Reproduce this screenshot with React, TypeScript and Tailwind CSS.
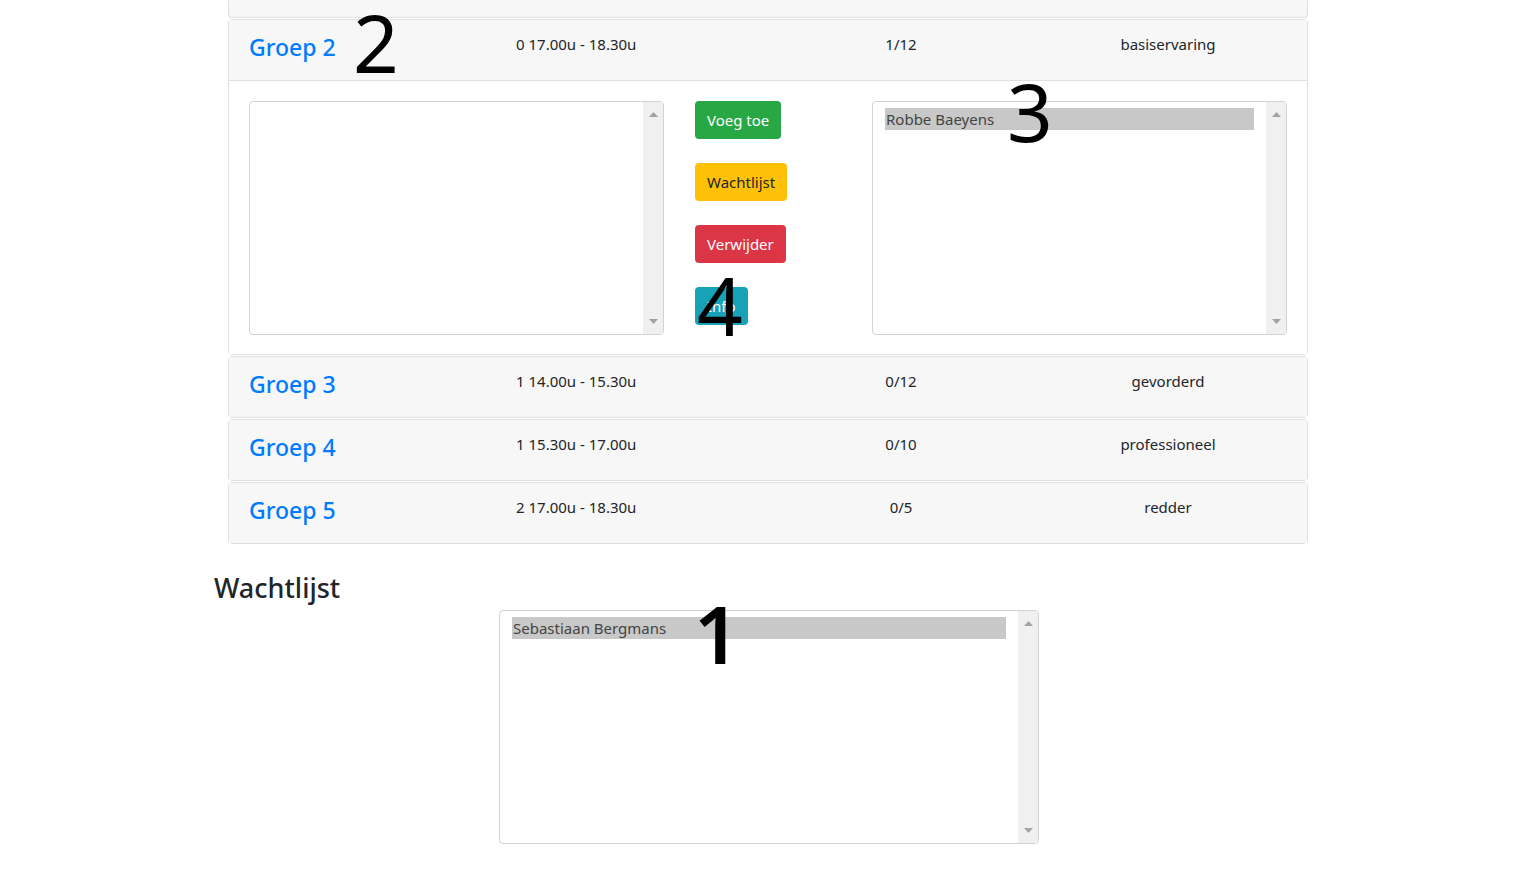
import React from 'react';

interface Groep {
  naam: string;
  tijd: string;
  bezetting: string;
  niveau: string;
}

const groepen: Groep[] = [
  { naam: 'Groep 3', tijd: '1 14.00u - 15.30u', bezetting: '0/12', niveau: 'gevorderd' },
  { naam: 'Groep 4', tijd: '1 15.30u - 17.00u', bezetting: '0/10', niveau: 'professioneel' },
  { naam: 'Groep 5', tijd: '2 17.00u - 18.30u', bezetting: '0/5', niveau: 'redder' },
];

const Scrollbar: React.FC = () => (
  <div className="w-[20px] h-full bg-[#f0f0f0] flex flex-col items-center justify-between py-[10px] flex-shrink-0">
    <svg width="9" height="5" viewBox="0 0 9 5">
      <path d="M0 5 L4.5 0 L9 5 Z" fill="#a3a3a3" />
    </svg>
    <svg width="9" height="5" viewBox="0 0 9 5">
      <path d="M0 0 L4.5 5 L9 0 Z" fill="#a3a3a3" />
    </svg>
  </div>
);

const ListBox: React.FC<{ items: string[]; className?: string }> = ({ items, className = '' }) => (
  <div className={`h-[234px] border border-[#ced4da] rounded-[4px] bg-white flex overflow-hidden ${className}`}>
    <div className="flex-1 pt-[6px] px-[12px]">
      {items.map((item) => (
        <div key={item} className="bg-[#c8c8c8] h-[22px] leading-[22px] text-[15px] text-[#444] pl-[1px]">
          {item}
        </div>
      ))}
    </div>
    <Scrollbar />
  </div>
);

const Marker: React.FC<{ n: string; className: string }> = ({ n, className }) => (
  <span className={`absolute text-black text-[80px] leading-none pointer-events-none ${className}`}>{n}</span>
);

const HeaderRow: React.FC<Groep & { open?: boolean }> = ({ naam, tijd, bezetting, niveau, open }) => (
  <div
    className={`bg-[#f7f7f7] px-[20px] pt-[12px] flex items-start text-[#212529] ${
      open ? 'h-[61px] border-b border-[#dfdfdf]' : 'h-[60px]'
    }`}
  >
    <div className="w-[267px] text-[#007bff] text-[23px] leading-[30px] font-medium">{naam}</div>
    <div className="w-[270px] text-[15px] leading-[24px]">{tijd}</div>
    <div className="w-[230px] text-center text-[15px] leading-[24px]">{bezetting}</div>
    <div className="ml-auto w-[238px] text-center text-[15px] leading-[24px]">{niveau}</div>
  </div>
);

const Btn: React.FC<{ label: string; className: string }> = ({ label, className }) => (
  <button className={`h-[38px] px-[12px] rounded-[4px] text-[15px] leading-[24px] ${className}`}>{label}</button>
);

export default function App() {
  return (
    <div className="min-h-screen bg-white" style={{ fontFamily: '"Noto Sans", "Open Sans", sans-serif' }}>
      <div className="w-[1110px] mx-auto">
        <div className="w-[1080px] ml-[14px]">
          {/* vorige groep, grotendeels uit beeld */}
          <div className="h-[18px] bg-[#f7f7f7] border-x border-b border-[#dfdfdf] rounded-b-[4px] mb-[1px]" />

          {/* Groep 2, opengeklapt */}
          <div className="relative border border-[#dfdfdf] rounded-[4px] mb-[1px]">
            <HeaderRow naam="Groep 2" tijd="0 17.00u - 18.30u" bezetting="1/12" niveau="basiservaring" open />
            <Marker n="2" className="left-[124px] top-[-18px]" />
            <div className="pt-[20px] pb-[19px] px-[20px] flex bg-white">
              <ListBox items={[]} className="w-[415px]" />
              <div className="w-[208px] pl-[31px] flex flex-col items-start gap-[24px]">
                <Btn label="Voeg toe" className="bg-[#28a745] text-white" />
                <Btn label="Wachtlijst" className="bg-[#ffc107] text-[#212529]" />
                <Btn label="Verwijder" className="bg-[#dc3545] text-white" />
                <div className="relative">
                  <Btn label="Info" className="bg-[#17a2b8] text-white" />
                  <Marker n="4" className="left-[2px] top-[-22px]" />
                </div>
              </div>
              <div className="relative w-[415px]">
                <ListBox items={['Robbe Baeyens']} className="w-[415px]" />
                <Marker n="3" className="left-[135px] top-[-30px]" />
              </div>
            </div>
          </div>

          {groepen.map((g) => (
            <div key={g.naam} className="border border-[#dfdfdf] rounded-[4px] mb-[1px]">
              <HeaderRow {...g} />
            </div>
          ))}
        </div>

        <h3 className="mt-[27px] mb-[6px] text-[27px] leading-[33px] font-medium text-[#212529]">Wachtlijst</h3>
        <div className="relative w-[540px] mx-auto">
          <ListBox items={['Sebastiaan Bergmans']} className="w-[540px]" />
          <Marker n="1" className="left-[195px] top-[-17px] font-semibold" />
        </div>
      </div>
    </div>
  );
}
